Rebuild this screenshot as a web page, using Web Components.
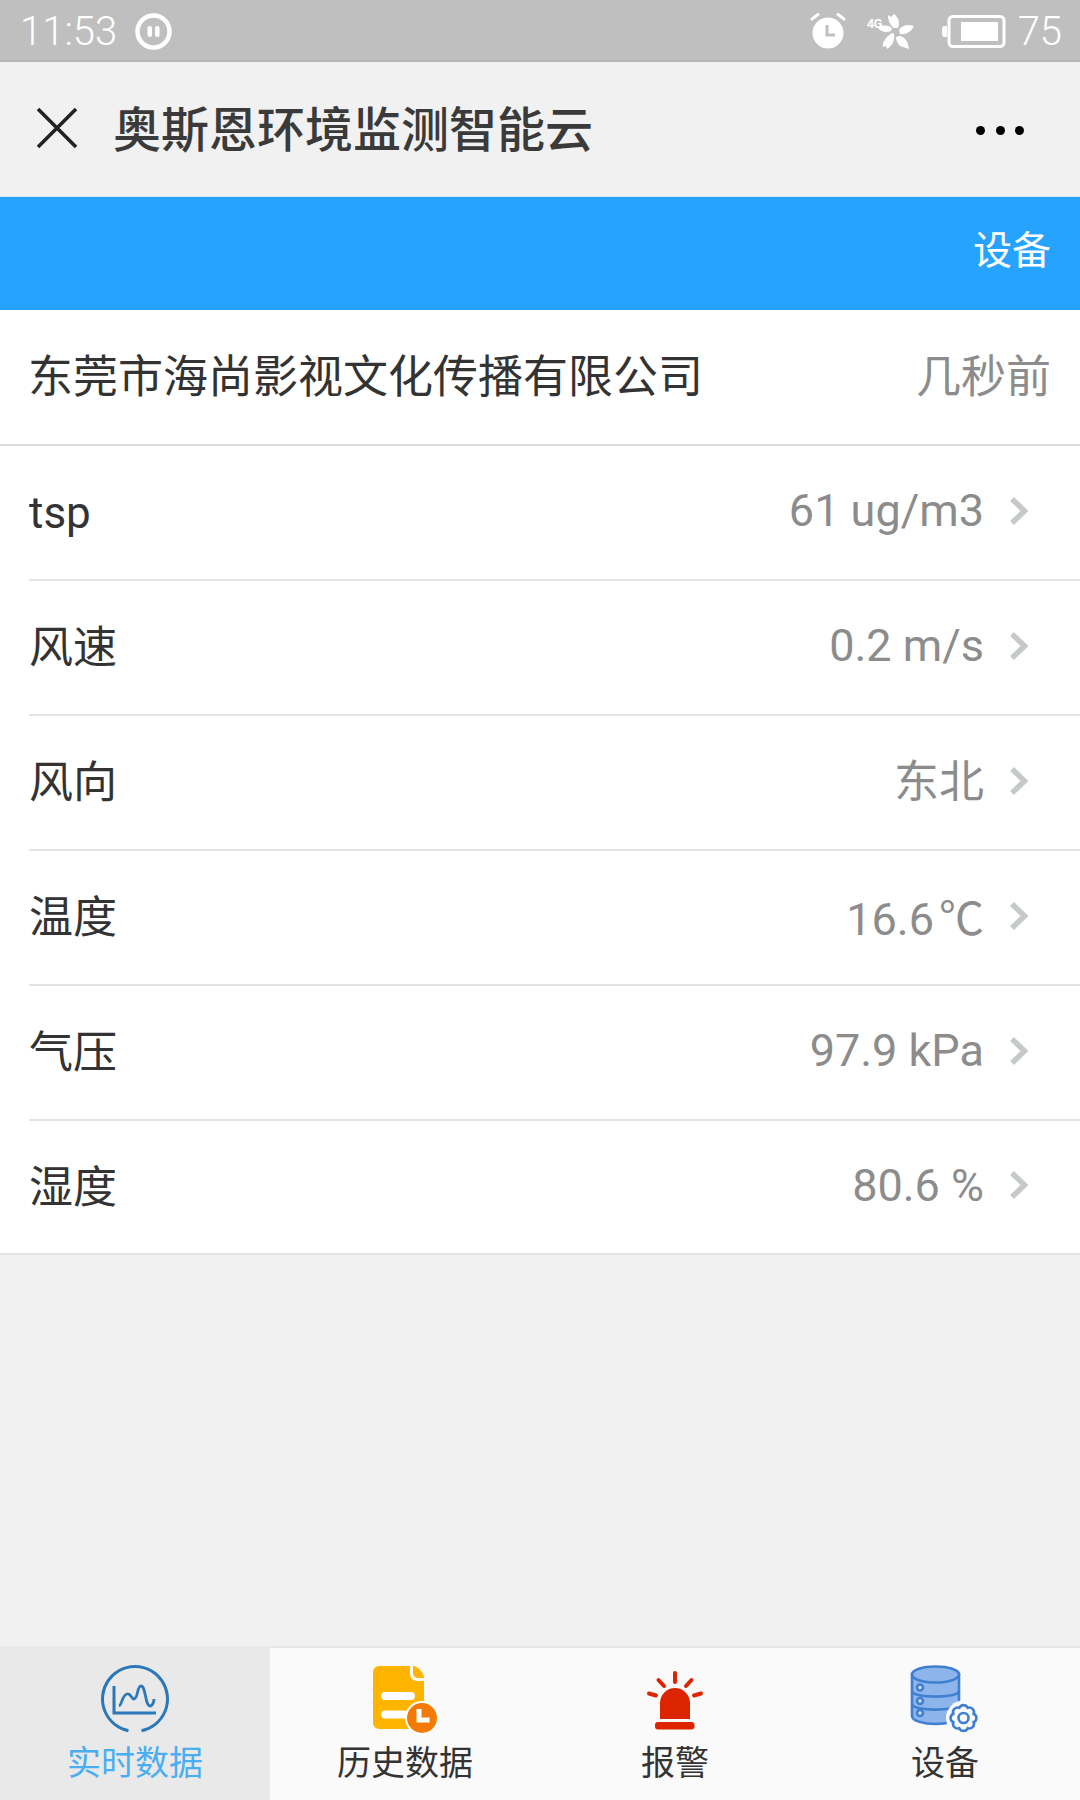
<!DOCTYPE html>
<html lang="zh"><head><meta charset="utf-8"><title>奥斯恩环境监测智能云</title>
<style>
html,body{margin:0;padding:0;background:#f1f1f1}
body{font-family:Roboto,"Noto Sans CJK SC",sans-serif;width:1080px;height:1800px;overflow:hidden}
app-shell{height:1800px}
</style></head><body>
<app-shell>
  <status-bar></status-bar>
  <nav-bar>奥斯恩环境监测智能云</nav-bar>
  <action-bar>设备</action-bar>
  <data-card>
    <card-head time="几秒前">东莞市海尚影视文化传播有限公司</card-head>
    <data-row value="61 ug/m3">tsp</data-row>
    <data-row value="0.2 m/s">风速</data-row>
    <data-row value="东北">风向</data-row>
    <data-row value="16.6 ℃">温度</data-row>
    <data-row value="97.9 kPa">气压</data-row>
    <data-row value="80.6 %" last>湿度</data-row>
  </data-card>
  <tab-bar>
    <tab-item active label="实时数据"><svg viewBox="0 0 80 72" width="80" height="72" fill="none" stroke="#2a78b8"><path d="M33.500 67.800A32.500 32.500 0 1 1 46.500 67.800" stroke-width="3"/><path d="M19 23V50H61" stroke-width="3"/><path d="M24 43C27 42 27 32 32 31C36 30 36 36 39 36C43 36 42 23 46 23C51 23 50 43 55 43C57 43 59 40 59 36" stroke-width="2.800"/></svg></tab-item>
    <tab-item label="历史数据"><svg viewBox="0 0 80 72" width="80" height="72"><path d="M14 3H45V11A7 7 0 0 0 52 18H59V60A6 6 0 0 1 53 66H14A6 6 0 0 1 8 60V9A6 6 0 0 1 14 3Z" fill="#ffb400"/><path d="M48 3C53 3 59 10 59 15H53A5 5 0 0 1 48 10Z" fill="#ffb400"/><rect x="16" y="29" width="34" height="8" rx="4" fill="#fff"/><rect x="16" y="47.500" width="27" height="8" rx="4" fill="#fff"/><circle cx="57" cy="55" r="17" fill="#fff"/><circle cx="57" cy="55" r="15" fill="#f47a08"/><path d="M54 46V57H64.500" fill="none" stroke="#fff" stroke-width="5"/></svg></tab-item>
    <tab-item label="报警"><svg viewBox="0 0 80 72" width="80" height="72" fill="#dc2400"><path d="M25 56V40A15 15 0 0 1 55 40V56Z"/><rect x="20" y="59" width="39.500" height="7.500" rx="3"/><g stroke="#dc2400" stroke-width="4" stroke-linecap="round"><path d="M40 10V19"/><path d="M23.500 17L29 23"/><path d="M56.500 17L51 23"/><path d="M14 30.500L21 32.500"/><path d="M66 30.500L59 32.500"/></g></svg></tab-item>
    <tab-item label="设备"><svg viewBox="0 0 80 72" width="80" height="72"><g fill="#8db5ec" stroke="#3f7fd0" stroke-width="2.600"><path d="M7 11.500V53C7 58 19 61 30.500 61C42 61 54 58 54 53V11.500Z"/><ellipse cx="30.500" cy="11.500" rx="23.500" ry="8"/><path d="M7 28C7 35.500 54 35.500 54 28" fill="none"/><path d="M7 41C7 48.500 54 48.500 54 41" fill="none"/><circle cx="15" cy="24.500" r="3" fill="#cfe0f8"/><circle cx="15" cy="38" r="3" fill="#cfe0f8"/><circle cx="15" cy="50" r="3" fill="#cfe0f8"/></g><circle cx="58.500" cy="55" r="17.500" fill="#fafafa"/><g fill="none" stroke="#3f7fd0" stroke-width="2.600"><path d="M68.660 59.210A4.600 4.600 0 0 1 62.710 65.160A4.600 4.600 0 0 1 54.290 65.160A4.600 4.600 0 0 1 48.340 59.210A4.600 4.600 0 0 1 48.340 50.790A4.600 4.600 0 0 1 54.290 44.840A4.600 4.600 0 0 1 62.710 44.840A4.600 4.600 0 0 1 68.660 50.790A4.600 4.600 0 0 1 68.660 59.210Z"/><circle cx="58.500" cy="55" r="5"/></g></svg></tab-item>
  </tab-bar>
</app-shell>
<script>
function def(name, html, init){
  customElements.define(name, class extends HTMLElement{
    constructor(){super();this.attachShadow({mode:'open'}).innerHTML=html;}
    connectedCallback(){ if(init) init(this); }
  });
}
const CJK='Roboto,"Noto Sans CJK SC",sans-serif';
const hasCJK=s=>/[\u4e00-\u9fff]/.test(s);
def('app-shell',`<style>:host{display:flex;flex-direction:column;width:1080px;background:#f1f1f1}
::slotted(tab-bar){margin-top:auto}</style><slot></slot>`);

def('status-bar',`<style>
:host{display:flex;align-items:center;box-sizing:border-box;height:62px;background:#bfbfbf;border-bottom:2px solid #b6b6b6;color:#fff;font:300 40px ${CJK};padding:2px 18px 0 20px}
.l{display:flex;align-items:center;gap:18px}
.r{margin-left:auto;display:flex;align-items:center}
svg{display:block}
.net{position:relative;width:47px;height:35px;margin:0 28px 0 21px}
.net span{position:absolute;left:0;top:2px;font:700 13px Roboto,sans-serif;color:#fff;letter-spacing:-.5px}
.n{margin-left:12px}
</style>
<div class="l"><span>11:53</span>
<svg width="37" height="37" viewBox="0 0 37 37"><circle cx="18.500" cy="18.500" r="16" fill="none" stroke="#fff" stroke-width="4.500"/><rect x="12.500" y="13" width="4.500" height="11" rx="2" fill="#fff"/><rect x="20" y="13" width="4.500" height="11" rx="2" fill="#fff"/></svg></div>
<div class="r">
<svg width="36" height="36" viewBox="0 0 36 36"><circle cx="18" cy="20" r="15.500" fill="#fff"/><path d="M2 6L8 1.500M34 6L28 1.500" stroke="#fff" stroke-width="3" stroke-linecap="round"/><path d="M17 12V22H25" fill="none" stroke="#bfbfbf" stroke-width="3"/></svg>
<div class="net"><span>4G</span><svg width="47" height="35" viewBox="0 0 47 35" fill="#fff"><path d="M27 14C22 10 21 5 21 1L24 3L27 0C32 4 33 9 31 14Z"/><path d="M32 16C35 11 41 10 47 12C44 18 39 21 33 20Z"/><path d="M32 22C37 22 41 27 42 35L33 32C30 29 29 26 29 23Z"/><path d="M27 20C28 26 26 31 20 35L19 32L16 33C15 28 19 23 25 19Z"/><path d="M24 17C19 19 14 18 10 13C15 11 21 11 25 14Z"/></svg></div>
<svg width="64" height="33" viewBox="0 0 64 33"><rect x="7" y="1.500" width="55" height="30" rx="4" fill="none" stroke="#fff" stroke-width="3"/><path d="M5 11H1.500L0 13V20L1.500 22H5Z" fill="#fff"/><rect x="19" y="7" width="37" height="19" fill="#fff"/></svg>
<span class="n">75</span></div>`);

def('nav-bar',`<style>
:host{display:flex;align-items:center;box-sizing:border-box;height:135px;background:#f1f1f1;padding:0 56px 0 36px;border-bottom:1px solid #d9e6ec}
svg{display:block;flex:none;margin-bottom:2px}
.t{margin-left:35px;padding-bottom:7px;font:500 48px ${CJK};color:#3a3a3a;white-space:nowrap}
.m{margin-left:auto;display:flex;gap:10.500px;margin-top:2px}
.m i{width:9px;height:9px;border-radius:50%;background:#000}
</style>
<svg width="42" height="42" viewBox="0 0 42 42"><path d="M2 2L40 40M40 2L2 40" stroke="#222" stroke-width="3.600"/></svg>
<div class="t"><slot></slot></div><div class="m"><i></i><i></i><i></i></div>`);

def('action-bar',`<style>
:host{display:flex;align-items:center;justify-content:flex-end;box-sizing:border-box;height:113px;background:#26a2ff;color:#fff;font:400 39px ${CJK};padding:0 29px 14px 0}
</style><slot></slot>`);

def('data-card',`<style>:host{display:block;background:#fff;border-bottom:2px solid #e2e2e2}</style><slot></slot>`);

def('card-head',`<style>
:host{display:flex;align-items:center;justify-content:space-between;box-sizing:border-box;height:136px;padding:0 29px 7px 28px;border-bottom:2px solid #dcdcdc;color:#333;font:400 45px ${CJK}}
.v{color:#8c8c8c}
</style><span><slot></slot></span><span class="v"></span>`,
el=>{el.shadowRoot.querySelector('.v').textContent=el.getAttribute('time');});

def('data-row',`<style>
:host{display:block;padding-left:29px}
.i{display:flex;align-items:center;box-sizing:border-box;height:135px;padding-right:52px;border-bottom:2px solid #e4e4e4;font:400 44px ${CJK};color:#333}
:host([last]) .i{border-bottom:0;height:132px}
.lab.c{padding-bottom:7px}
.v{margin-left:auto;color:#8c8c8c;font-size:45px;padding-bottom:4px}
.v.c{padding-bottom:8px}
.v b{font-weight:400;margin-left:5px}
svg{display:block;margin:0 0 4px 26px;flex:none}
</style><div class="i"><span class="lab"><slot></slot></span><span class="v"></span>
<svg width="18" height="28" viewBox="0 0 18 28"><path d="M2 2L14.500 14L2 26" fill="none" stroke="#c6c9c9" stroke-width="5.500"/></svg></div>`,
el=>{const r=el.shadowRoot,v=r.querySelector('.v'),a=el.getAttribute('value');
  const m=a.match(/^(.*?) (℃)$/);
  if(m){v.append(m[1]);const b=document.createElement('b');b.textContent=m[2];v.append(b);}else v.textContent=a;
  if(hasCJK(a))v.classList.add('c');
  if(hasCJK(el.textContent))r.querySelector('.lab').classList.add('c');});

def('tab-bar',`<style>:host{display:grid;grid-template-columns:repeat(4,270px);height:154px;box-sizing:border-box;background:#fafafa;border-top:2px solid #e6e6e6}</style><slot></slot>`);

def('tab-item',`<style>
:host{display:flex;flex-direction:column;align-items:center;box-sizing:border-box;padding-top:15px;color:#333;font:400 34px/1 ${CJK}}
:host([active]){background:#e9e9e9;color:#4aaef2;margin-top:-2px;padding-top:17px}
.l{margin-top:11px}
::slotted(svg){display:block}
</style><slot></slot><span class="l"></span>`,
el=>{el.shadowRoot.querySelector('.l').textContent=el.getAttribute('label');});
</script>
</body></html>
